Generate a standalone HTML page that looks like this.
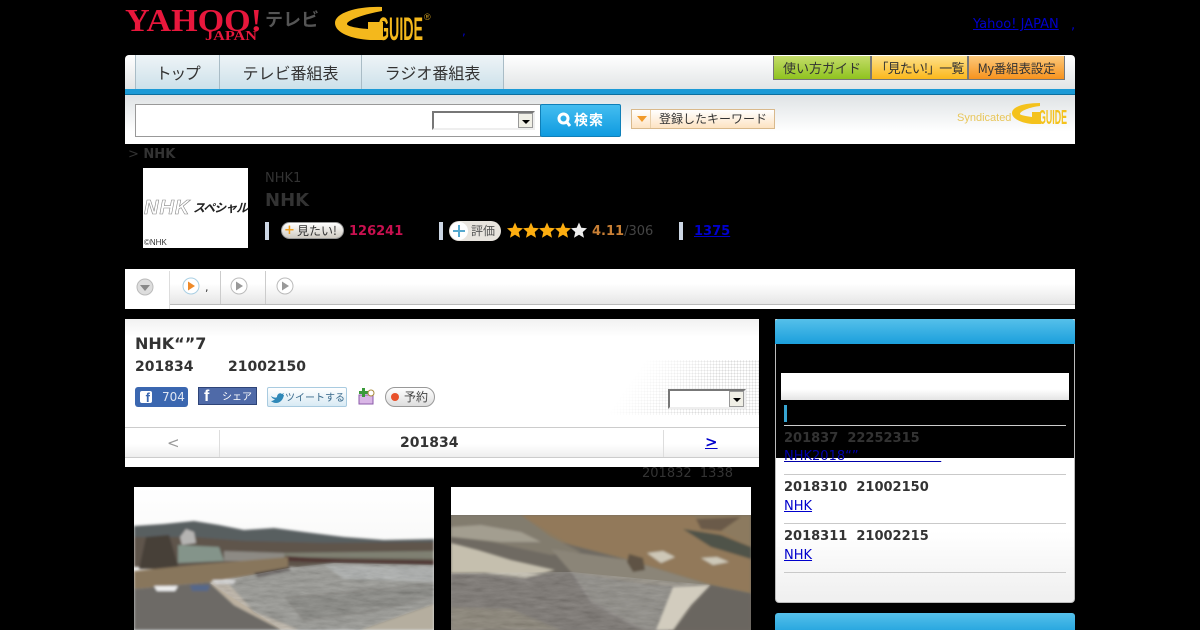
<!DOCTYPE html>
<html lang="ja"><head><meta charset="utf-8"><title>NHK</title>
<style>
html,body{margin:0;padding:0;background:#000;width:1200px;height:630px;overflow:hidden}
body{position:relative;font-family:"DejaVu Sans","Noto Sans CJK JP",sans-serif;font-size:13px;color:#333}
.a{position:absolute;white-space:nowrap}
.b{font-weight:bold}
a{color:#00c;text-decoration:underline}
.jp{font-family:"Noto Sans CJK JP",sans-serif}
.tab{position:absolute;top:55px;height:34px;background:linear-gradient(#eef4f7,#cde1ea);border-right:1px solid #a9bcc6;border-left:1px solid #a9bcc6;box-sizing:border-box;font:16px/35px "Noto Sans CJK JP",sans-serif;color:#333;text-align:center;white-space:nowrap}
.btn{position:absolute;top:56px;height:24px;box-sizing:border-box;border:1px solid #777;border-top:0;font:13px/23px "Noto Sans CJK JP",sans-serif;color:#333;text-align:center;white-space:nowrap;overflow:hidden}
.sel{position:absolute;box-sizing:border-box;background:#fff;border:2px solid;border-color:#777 #eee #eee #777}
.sel i{position:absolute;right:0;top:0;bottom:0;width:15px;background:#f0efe6;border:1px solid #999;box-sizing:border-box}
.sel i:after{content:"";position:absolute;left:3px;top:6px;border:4px solid transparent;border-top:4px solid #000}
.bar{position:absolute;width:4px;height:18px;background:#ccd6e4}
.ln{position:absolute;left:784px;width:282px;height:1px;background:#c9c9c9}
</style></head><body>

<!-- header logos -->
<svg class="a" style="left:124px;top:4px" width="142" height="40" viewBox="0 0 142 40">
<text x="1" y="27" font-family="Liberation Serif,serif" font-weight="bold" font-size="32" fill="#e8173c" textLength="137" lengthAdjust="spacingAndGlyphs">YAHOO!</text>
<text x="81" y="36" font-family="Liberation Serif,serif" font-weight="bold" font-size="14" fill="#e8173c" textLength="52" lengthAdjust="spacingAndGlyphs">JAPAN</text>
</svg>
<div class="a jp b" style="left:265px;top:7px;font-size:18px;line-height:24px;color:#555">テレビ</div>
<svg class="a" style="left:334px;top:6px" width="100" height="36" viewBox="0 0 100 36">
<path d="M48 1 C26 0 1 6 1 17 C1 27 18 33 36 34 L49 34 L49 16 L34 16 L34 23 C21 22 13 20 13 18 C13 14 31 8 48 5Z" fill="#f4b81c"/>
<text x="44" y="34" font-family="Liberation Sans,sans-serif" font-weight="bold" font-size="32" fill="#f4b81c" textLength="45" lengthAdjust="spacingAndGlyphs">GUIDE</text>
<text x="90" y="14" font-family="Liberation Sans,sans-serif" font-size="9" fill="#c99a20">®</text>
</svg>
<div class="a" style="left:462px;top:24px;color:#00c;font-size:12px">,</div>
<a class="a" style="left:973px;top:18px;line-height:13px">Yahoo! JAPAN</a>
<div class="a" style="left:1071px;top:19px;color:#00c;line-height:13px">,</div>

<!-- nav -->
<div class="a" style="left:125px;top:55px;width:950px;height:34px;background:linear-gradient(#fff,#e2e5e6);border-radius:4px 4px 0 0"></div>
<div class="tab" style="left:135px;width:85px;letter-spacing:-1.5px">トップ</div>
<div class="tab" style="left:219px;width:143px">テレビ番組表</div>
<div class="tab" style="left:361px;width:143px">ラジオ番組表</div>
<div class="btn" style="left:773px;width:98px;background:linear-gradient(#c4dc6a,#8fc31f)">使い方ガイド</div>
<div class="btn" style="left:871px;width:97px;background:linear-gradient(#fde08a,#fbb81c);letter-spacing:-.9px">「見たい!」一覧</div>
<div class="btn" style="left:968px;width:97px;background:linear-gradient(#fcc87a,#f7931e);font-size:12.500px;letter-spacing:-.2px">My番組表設定</div>
<div class="a" style="left:125px;top:89px;width:950px;height:6px;background:#1b9ad6;border-bottom:1px solid #0c6f9e;box-sizing:border-box"></div>

<!-- search -->
<div class="a" style="left:125px;top:95px;width:950px;height:49px;background:linear-gradient(#dfe3e5,#fff 75%)"></div>
<div class="a" style="left:135px;top:104px;width:406px;height:33px;box-sizing:border-box;background:#fff;border:1px solid #999"></div>
<div class="sel" style="left:432px;top:111px;width:103px;height:19px"><i></i></div>
<div class="a jp b" style="left:540px;top:104px;width:81px;height:33px;box-sizing:border-box;border:1px solid #0f7fb8;background:linear-gradient(#44bdf0,#0f9be0);color:#fff;font-size:14px;line-height:31px;text-align:center;border-radius:2px;letter-spacing:1px"><svg width="14" height="15" viewBox="0 0 14 15" style="vertical-align:-2px;margin-right:3px"><circle cx="6.500" cy="6.500" r="4.500" fill="none" stroke="#fff" stroke-width="3"/><path d="M9 9l4 5" stroke="#fff" stroke-width="3"/></svg>検索</div>
<div class="a jp" style="left:631px;top:109px;width:144px;height:20px;box-sizing:border-box;border:1px solid #d9b98c;background:linear-gradient(#fff,#fde3c2);font-size:12px;line-height:18px;padding-left:27px;color:#333">登録したキーワード</div>
<div class="a" style="left:637px;top:116px;border:5px solid transparent;border-top:6px solid #f19a2a"></div>
<div class="a" style="left:650px;top:110px;width:1px;height:18px;background:#e8cfa9"></div>
<div class="a" style="left:957px;top:111px;font:11px/14px 'Liberation Sans',sans-serif;color:#e8c65a">Syndicated</div>
<svg class="a" style="left:1011px;top:102px" width="58" height="24" viewBox="0 0 58 24">
<path d="M29 1 C15 1 1 4 1 11 C1 17 11 21 21 22 L30 22 L30 10 L21 10 L21 15 C14 14 9 13 9 12 C9 9 19 5 29 4Z" fill="#f4c21c"/>
<text x="28" y="22" font-family="Liberation Sans,sans-serif" font-weight="bold" font-size="20" fill="#f4c21c" textLength="28" lengthAdjust="spacingAndGlyphs">GUIDE</text>
</svg>

<!-- program head -->
<div class="a b" style="left:128px;top:147px;color:#333"><span style="font-weight:normal">&gt;</span> NHK</div>
<div class="a" style="left:143px;top:168px;width:105px;height:80px;background:#fff"></div>
<div class="a" style="left:144px;top:197px;font:italic bold 20px/22px 'Liberation Sans',sans-serif;color:#fff;-webkit-text-stroke:.6px #888;letter-spacing:1px">NHK</div>
<div class="a jp b" style="left:193px;top:198px;font-size:12px;line-height:20px;font-style:italic;color:#222;letter-spacing:-1px">スペシャル</div>
<div class="a" style="left:144px;top:238px;font:8px/10px 'Liberation Sans',sans-serif;color:#333">©NHK</div>
<div class="a" style="left:265px;top:171px;color:#333">NHK1</div>
<div class="a b" style="left:265px;top:190px;font-size:18px;line-height:22px;color:#333">NHK</div>

<div class="bar" style="left:265px;top:222px"></div>
<div class="a jp" style="left:281px;top:222px;width:63px;height:17px;box-sizing:border-box;border:1px solid #999;border-radius:9px;background:linear-gradient(#fff,#cfcac2);font-size:12px;line-height:15px;padding-left:15px;color:#333">見たい!</div>
<div class="a b" style="left:284px;top:222px;color:#f0a020;font-size:13px;line-height:17px">+</div>
<div class="a b" style="left:349px;top:224px;color:#c8104f">126241</div>

<div class="bar" style="left:439px;top:222px"></div>
<div class="a jp" style="left:449px;top:221px;width:52px;height:20px;box-sizing:border-box;border-radius:10px;background:#e8e4de;font-size:12px;line-height:20px;padding-left:22px;color:#555">評価</div>
<div class="a" style="left:450px;top:222px;width:18px;height:18px;border-radius:9px;background:#fff"></div>
<svg class="a" style="left:452px;top:224px" width="14" height="14"><path d="M7 1v12M1 7h12" stroke="#56a9cf" stroke-width="2"/></svg>
<svg class="a" style="left:507px;top:222px" width="82" height="17" viewBox="0 0 82 17">
<defs><path id="s" d="M8 .5l2.300 5.300 5.700.5-4.300 3.800 1.300 5.600L8 12.800 3 15.700l1.300-5.600L0 6.300l5.700-.5z"/></defs>
<use href="#s" fill="#fdae10"/><use href="#s" x="16" fill="#fdae10"/><use href="#s" x="32" fill="#fdae10"/><use href="#s" x="48" fill="#fdae10"/><use href="#s" x="64" fill="#eee"/>
</svg>
<div class="a" style="left:592px;top:224px;color:#444"><b style="color:#c87f35">4.11</b>/306</div>
<div class="bar" style="left:679px;top:222px"></div>
<a class="a b" style="left:694px;top:224px">1375</a>

<!-- tabs bar -->
<div class="a" style="left:125px;top:269px;width:950px;height:40px;background:#fff"></div>
<div class="a" style="left:125px;top:270px;width:950px;height:34px;background:linear-gradient(#fff 40%,#e6e6e6);border-bottom:1px solid #bbb"></div>
<div class="a" style="left:125px;top:271px;width:45px;height:38px;background:#fff;border-right:1px solid #ddd;box-sizing:border-box"></div>
<div class="a" style="left:220px;top:271px;width:1px;height:33px;background:#ccc"></div>
<div class="a" style="left:265px;top:271px;width:1px;height:33px;background:#ccc"></div>
<svg class="a" style="left:135px;top:277px" width="160" height="20" viewBox="0 0 160 20">
<circle cx="10" cy="10" r="8" fill="#ddd" stroke="#bbb"/><path d="M5 8h10l-5 6z" fill="#888"/>
<circle cx="56" cy="9" r="8" fill="#fff" stroke="#a9cfe3"/><path d="M53 4.500l7 4.500-7 4.500z" fill="#ee8a2a"/>
<circle cx="104" cy="9" r="8" fill="#fff" stroke="#bbb"/><path d="M101 4.500l7 4.500-7 4.500z" fill="#999"/>
<circle cx="150" cy="9" r="8" fill="#fff" stroke="#bbb"/><path d="M147 4.500l7 4.500-7 4.500z" fill="#999"/>
</svg>
<div class="a" style="left:205px;top:281px;font-size:11px">,</div>

<!-- main card -->
<div class="a" style="left:125px;top:319px;width:634px;height:148px;background:linear-gradient(#f1f1f1,#fff 18px)"></div>
<div class="a" style="left:580px;top:360px;width:179px;height:55px;background:radial-gradient(#dcdcdc .9px,transparent 1px) 0 0/3px 3px;-webkit-mask-image:linear-gradient(125deg,transparent 30%,#000 70%);mask-image:linear-gradient(125deg,transparent 30%,#000 70%)"></div>
<div class="a b" style="left:135px;top:333px;font-size:16px;line-height:21px">NHK“”7</div>
<div class="a b" style="left:135px;top:358px;font-size:14px;line-height:18px">201834</div>
<div class="a b" style="left:228px;top:358px;font-size:14px;line-height:18px">21002150</div>

<div class="a" style="left:135px;top:387px;width:53px;height:20px;background:#3b67b0;border-radius:3px;color:#dfe6f3;font-size:12px;line-height:20px;padding-left:27px;box-sizing:border-box">704</div>
<div class="a b" style="left:140px;top:391px;width:12px;height:12px;background:#fff;border-radius:2px;color:#3b67b0;font:bold 13px/14px 'Liberation Sans',sans-serif;text-align:right;padding-right:2px;box-sizing:border-box">f</div>
<div class="a jp" style="left:198px;top:387px;width:59px;height:18px;box-sizing:border-box;background:#4f6aa8;border:1px solid #2e4478;color:#fff;font-size:10px;line-height:16px;padding-left:23px">シェア</div>
<div class="a b" style="left:204px;top:387px;font:bold 16px/19px 'Liberation Sans',sans-serif;color:#fff">f</div>
<div class="a jp" style="left:267px;top:387px;width:80px;height:20px;box-sizing:border-box;background:linear-gradient(#fff,#d8eaf4);border:1px solid #a9cbe0;border-radius:2px;color:#3a6a8c;font-size:10px;line-height:18px;padding-left:17px">ツイートする</div>
<svg class="a" style="left:270px;top:391px" width="14" height="12"><path d="M1 5c3 2 5 2 6 1 0-3 3-5 5-3l2-1-1 2 1 0c-1 5-4 8-8 8-2 0-4-1-5-2 2 0 3-1 4-2-2 0-3-1-4-3z" fill="#2f88b8"/></svg>
<svg class="a" style="left:357px;top:388px" width="18" height="17"><rect x="2" y="7" width="14" height="9" fill="#d9b6e6" stroke="#8a5aa8"/><path d="M2 3h3V0h3v3h3v3H8v3H5V6H2z" fill="#3a9a3a"/><circle cx="14" cy="5" r="3" fill="#fff" stroke="#a88a3a"/></svg>
<div class="a jp" style="left:385px;top:387px;width:50px;height:20px;box-sizing:border-box;background:linear-gradient(#fff,#ddd);border:1px solid #999;border-radius:10px;font-size:12px;line-height:18px;padding-left:18px;color:#444">予約</div>
<div class="a" style="left:391px;top:393px;width:8px;height:8px;border-radius:4px;background:#e8502a"></div>
<div class="sel" style="left:668px;top:389px;width:78px;height:20px"><i></i></div>

<div class="a" style="left:125px;top:427px;width:634px;height:31px;box-sizing:border-box;border-top:1px solid #ccc;border-bottom:1px solid #ccc;background:linear-gradient(#fff 55%,#eee)"></div>
<div class="a" style="left:219px;top:430px;width:1px;height:27px;background:#ddd"></div>
<div class="a" style="left:663px;top:430px;width:1px;height:27px;background:#ddd"></div>
<div class="a" style="left:167px;top:434px;color:#999;font-size:15px;line-height:18px">&lt;</div>
<div class="a b" style="left:400px;top:434px;font-size:14px;line-height:18px">201834</div>
<a class="a b" style="left:705px;top:433px;font-size:15px;line-height:18px">&gt;</a>
<div class="a" style="left:642px;top:467px;color:#333;line-height:13px">201832&nbsp;&nbsp;1338</div>

<!-- photo 1 -->
<svg class="a" style="left:134px;top:487px" width="300" height="143" viewBox="0 0 300 143">
<defs>
<linearGradient id="sky" x1="0" y1="0" x2="0" y2="1"><stop offset="0" stop-color="#fff"/><stop offset=".55" stop-color="#f7f7f6"/><stop offset=".7" stop-color="#e4e8ea"/><stop offset="1" stop-color="#dfe4e6"/></linearGradient>
<filter id="bl" x="-5%" y="-5%" width="110%" height="110%"><feGaussianBlur stdDeviation="1.200"/></filter>
<filter id="tx" x="0" y="0" width="100%" height="100%"><feTurbulence type="fractalNoise" baseFrequency=".06 .25" numOctaves="3" seed="4"/><feColorMatrix values=".33 .33 .33 0 0 .33 .33 .33 0 0 .33 .33 .33 0 0 0 0 0 0 .9"/></filter>
</defs>
<rect width="300" height="143" fill="url(#sky)"/>
<g filter="url(#bl)">
<path d="M0 39 L30 37 60 34 85 38 110 43 140 41 170 45 210 50 250 53 300 52 V80 H0Z" fill="#585e60"/>
<path d="M0 50 L60 50 110 54 190 56 300 55 V80 H0Z" fill="#5f554c"/>
<path d="M12 50 L35 48 45 82 5 82Z" fill="#463f39"/>
<path d="M46 50 L52 42 60 45 62 56 48 58Z" fill="#b5b4b2"/>
<path d="M44 58 L85 60 90 74 44 76Z" fill="#84948a"/>
<path d="M90 64 L150 66 150 74 90 74Z" fill="#8d8a84"/>
<path d="M150 66 L300 64 300 72 150 70Z" fill="#7f8072"/>
<path d="M151 69 L210 73 300 74 300 78 205 76 151 74Z" fill="#4f3532"/>
<path d="M0 84 L60 78 154 70 154 82 76 95 0 102Z" fill="#88765c"/>
<path d="M0 102 L76 95 100 118 148 143 H0Z" fill="#6d6b66"/>
<path d="M76 96 L154 81 200 76 300 78 300 125 230 143 148 143Z" fill="#8b8b85"/>
<path d="M76 96 L92 94 120 125 165 143 H148 L100 118Z" fill="#bcb1a0"/>
<path d="M190 78 L300 80 300 95 210 92Z" fill="#a5a8a6"/>
<path d="M150 110 L260 100 300 96 300 110 240 125 170 135Z" fill="#777670"/>
<path d="M226 143 L300 117 300 143Z" fill="#b5ae9f"/>
<path d="M20 99 h24 l-3 5 h-18z" fill="#eee"/>
<path d="M56 98 h20 l-2 6 h-16z" fill="#56688a"/>
<path d="M78 93 h24 l-3 4 h-17z" fill="#ddd"/>
<path d="M120 86 L155 80 157 84 124 91Z" fill="#4f4a46"/>
</g>
<clipPath id="w1"><path d="M76 96 L154 81 200 76 300 78 300 117 226 143 148 143Z"/></clipPath>
<rect width="300" height="143" filter="url(#tx)" clip-path="url(#w1)" opacity=".35"/>
</svg>

<!-- photo 2 -->
<svg class="a" style="left:451px;top:487px" width="300" height="143" viewBox="0 0 300 143">
<rect width="300" height="143" fill="#6f6a62"/>
<g filter="url(#bl)">
<path d="M0 28 H300 V107 L259 98 177 73 90 50 0 40Z" fill="#8c7a5f"/>
<path d="M70 28 H240 L300 60 300 105 259 97 177 72 120 58Z" fill="#92795a"/>
<path d="M0 28 H70 L100 50 130 65 100 68 40 55 0 50Z" fill="#827c6e"/>
<path d="M0 40 L30 38 70 45 90 55 50 55 0 50Z" fill="#a39e90"/>
<path d="M100 62 L177 73 259 98 190 100 120 85Z" fill="#8b8578"/>
<path d="M0 56 L27 63 60 73 104 83 74 91 34 86 0 86Z" fill="#c5bfae"/>
<path d="M0 86 L74 91 120 85 190 100 220 143 H0Z" fill="#6a6560"/>
<path d="M120 85 L190 96 240 100 222 143 H190 L140 115Z" fill="#84807a"/>
<path d="M0 120 L60 122 110 143 H0Z" fill="#7c7566"/>
<path d="M196 66 l16-2 12 6-14 6z" fill="#cdc7b7"/>
<path d="M250 71 l16-1 12 5-16 3z" fill="#cdc8b8"/>
<path d="M178 67 l14 4 2 12-12 2-6-10z" fill="#5e5344"/>
<path d="M232 42 L270 48 300 60 300 72 260 60Z" fill="#4f5348"/>
<path d="M245 32 L290 30 270 44 250 42Z" fill="#6b5a48"/>
</g>
<clipPath id="w2"><path d="M0 86 L120 85 259 98 217 143 H0Z"/></clipPath>
<rect width="300" height="143" filter="url(#tx)" clip-path="url(#w2)" opacity=".3"/>
<g filter="url(#bl)">
<path d="M222 100 L259 98 240 118 222 143 H205Z" fill="#d2ccbe"/>
<path d="M222 143 L259 99 300 107 300 143Z" fill="#6a6661"/>
</g>
<rect width="300" height="28" fill="#fff"/>
</svg>

<!-- sidebar -->
<div class="a" style="left:775px;top:319px;width:300px;height:284px;box-sizing:border-box;border:1px solid #bbb;border-top:0;border-radius:0 0 4px 4px;background:linear-gradient(#fff 75%,#efefef);overflow:hidden"></div>
<div class="a" style="left:776px;top:344px;width:298px;height:114px;background:#000"></div>
<a class="a" style="left:784px;top:449px;line-height:15px;color:#00a">NHK2018“”&nbsp;&nbsp;&nbsp;&nbsp;&nbsp;&nbsp;&nbsp;&nbsp;&nbsp;&nbsp;&nbsp;&nbsp;&nbsp;&nbsp;&nbsp;&nbsp;&nbsp;&nbsp;&nbsp;&nbsp;</a>
<div class="a" style="left:775px;top:344px;width:1px;height:114px;background:#bbb"></div>
<div class="a" style="left:1074px;top:344px;width:1px;height:114px;background:#bbb"></div>
<div class="a" style="left:775px;top:319px;width:300px;height:25px;background:linear-gradient(#55c0ea,#1b9fdc);border-radius:3px 3px 0 0"></div>
<div class="a" style="left:781px;top:373px;width:288px;height:27px;background:linear-gradient(#fff 60%,#e4e4e4)"></div>
<div class="a" style="left:784px;top:405px;width:3px;height:17px;background:#37a5d2"></div>
<div class="ln" style="top:425px;background:#ccc"></div>
<div class="a b" style="left:784px;top:431px;">201837&nbsp;&nbsp;22252315</div>
<div class="ln" style="top:474px"></div>
<div class="a b" style="left:784px;top:480px">2018310&nbsp;&nbsp;21002150</div>
<a class="a" style="left:784px;top:499px">NHK</a>
<div class="ln" style="top:523px"></div>
<div class="a b" style="left:784px;top:529px">2018311&nbsp;&nbsp;21002215</div>
<a class="a" style="left:784px;top:548px">NHK</a>
<div class="ln" style="top:572px"></div>
<div class="a" style="left:775px;top:613px;width:300px;height:17px;background:linear-gradient(#55c0ea,#2aa8e0);border-radius:3px 3px 0 0"></div>
</body></html>
